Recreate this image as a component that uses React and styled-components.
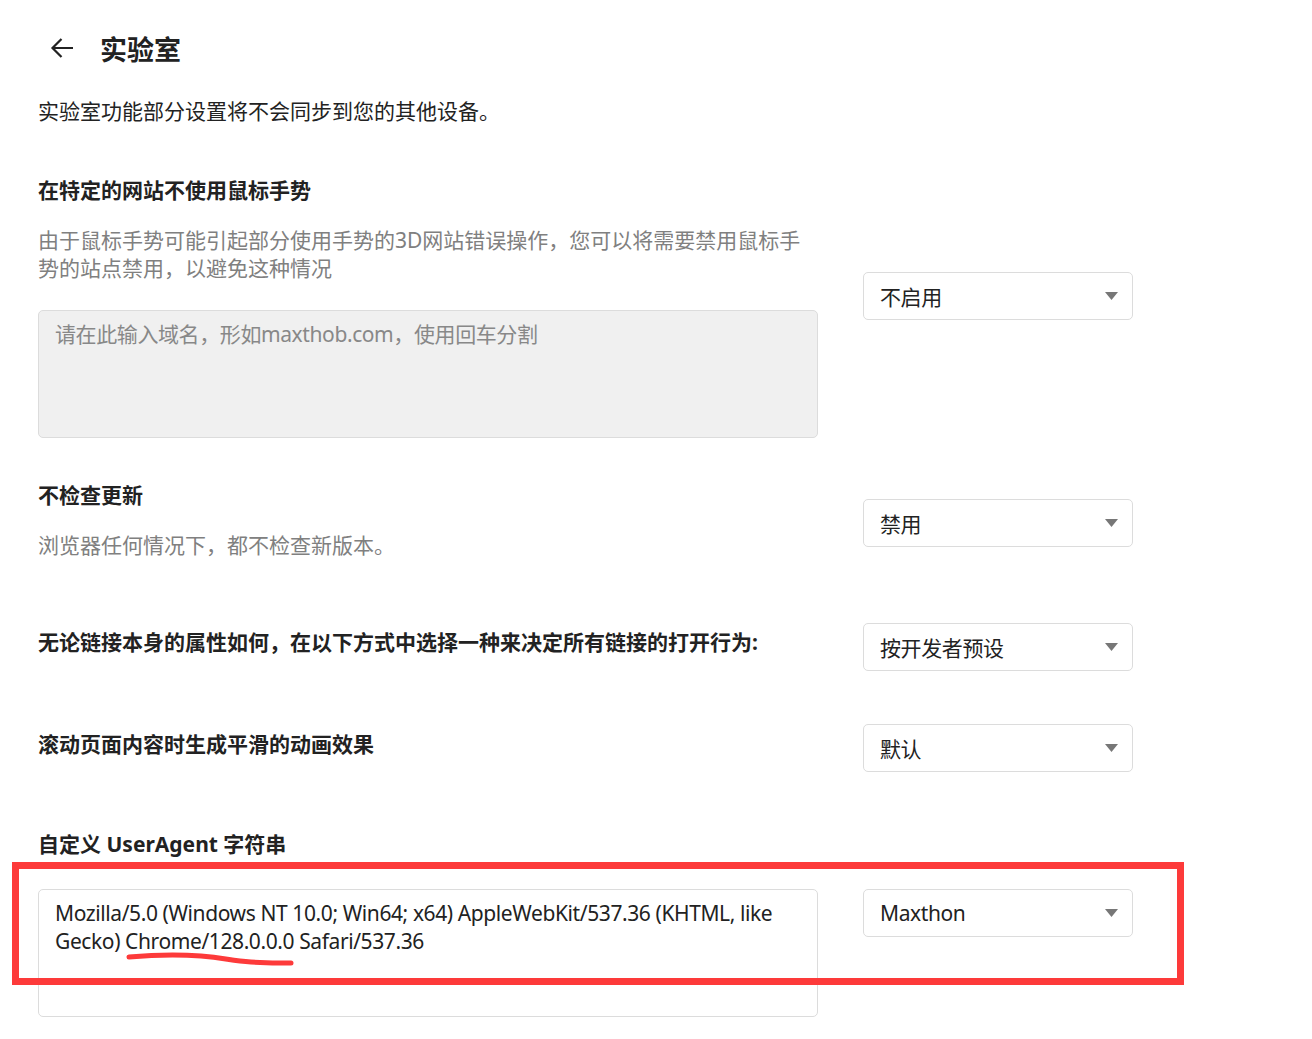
import React from "react";
import styled, { createGlobalStyle } from "styled-components";

const GlobalStyle = createGlobalStyle`
  html, body {
    margin: 0;
    padding: 0;
    background: #fff;
  }

  body {
    font-family: "Noto Sans", "Noto Sans CJK SC", sans-serif;
    color: #222;
  }
`;

const Page = styled.div`
  width: 1095px;
  padding: 30px 0 40px 38px;
`;

const Header = styled.div`
  display: flex;
  align-items: center;
  height: 40px;
`;

const BackButton = styled.button`
  display: flex;
  align-items: center;
  justify-content: center;
  width: 26px;
  height: 26px;
  margin: -4px 25px 0 11px;
  padding: 0;
  border: none;
  background: none;
  color: #222;
  cursor: pointer;
`;

const Title = styled.h1`
  margin: 0;
  font-size: 27px;
  font-weight: 700;
  line-height: 40px;
`;

const Notice = styled.p`
  margin: 27px 0 0;
  font-size: 21px;
  line-height: 28px;
  color: #222;
`;

const Section = styled.section`
  position: relative;
  display: grid;
  grid-template-columns: 780px 270px;
  column-gap: 45px;
  align-items: start;
  margin-top: ${(p) => p.$gap}px;
`;

const Heading = styled.h3`
  margin: 0;
  font-size: 21px;
  font-weight: 700;
  line-height: 28px;
  color: #222;
`;

const Description = styled.p`
  margin: 22px 0 0;
  font-size: 21px;
  line-height: 28px;
  color: #808080;
`;

const TextBox = styled.textarea`
  display: block;
  box-sizing: border-box;
  width: 780px;
  height: 128px;
  margin-top: ${(p) => p.$gap}px;
  padding: 9px 16px;
  border: 1px solid #dcdcdc;
  border-radius: 5px;
  background: ${(p) => (p.$filled ? "#f0f0f0" : "#fff")};
  font-family: "Noto Sans", "Noto Sans CJK SC", sans-serif;
  font-size: 21px;
  line-height: 28px;
  letter-spacing: -0.4px;
  color: #222;
  resize: none;
  outline: none;

  &::placeholder {
    color: #888;
  }
`;

const Select = styled.div`
  box-sizing: border-box;
  display: flex;
  align-items: center;
  justify-content: space-between;
  width: 270px;
  height: 48px;
  margin-top: ${(p) => p.$offset}px;
  padding: 0 14px 0 16px;
  border: 1px solid #dcdcdc;
  border-radius: 5px;
  background: #fff;
  font-size: 21px;
  letter-spacing: -0.4px;
  color: #222;
  cursor: pointer;
`;

const Highlight = styled.div`
  position: absolute;
  left: -26px;
  top: 32px;
  width: 1172px;
  height: 123px;
  box-sizing: border-box;
  border: 7px solid #fd3a3a;
  pointer-events: none;
`;

const Scribble = styled.svg`
  position: absolute;
  left: 88px;
  top: 122px;
  pointer-events: none;
`;

const Caret = () => (
  <svg width="13" height="8" viewBox="0 0 13 8">
    <path d="M0 0h13L6.5 8z" fill="#777" />
  </svg>
);

const Dropdown = ({ value, offset }) => (
  <Select $offset={offset}>
    <span>{value}</span>
    <Caret />
  </Select>
);

const UA =
  "Mozilla/5.0 (Windows NT 10.0; Win64; x64) AppleWebKit/537.36 (KHTML, like Gecko) Chrome/128.0.0.0 Safari/537.36";

const App = () => {
  return (
    <>
      <GlobalStyle />
      <Page>
        <Header>
          <BackButton aria-label="back">
            <svg width="24" height="22" viewBox="0 0 24 22" fill="none">
              <path
                d="M23 11H2.5M11.5 2L2.5 11l9 9"
                stroke="currentColor"
                strokeWidth="2.2"
              />
            </svg>
          </BackButton>
          <Title>实验室</Title>
        </Header>
        <Notice>实验室功能部分设置将不会同步到您的其他设备。</Notice>

        <Section $gap={51}>
          <div>
            <Heading>在特定的网站不使用鼠标手势</Heading>
            <Description>
              由于鼠标手势可能引起部分使用手势的3D网站错误操作，您可以将需要禁用鼠标手势的站点禁用，以避免这种情况
            </Description>
            <TextBox
              $filled
              $gap={28}
              placeholder="请在此输入域名，形如maxthob.com，使用回车分割"
            />
          </div>
          <Dropdown value="不启用" offset={96} />
        </Section>

        <Section $gap={43}>
          <div>
            <Heading>不检查更新</Heading>
            <Description>浏览器任何情况下，都不检查新版本。</Description>
          </div>
          <Dropdown value="禁用" offset={18} />
        </Section>

        <Section $gap={69}>
          <Heading>
            无论链接本身的属性如何，在以下方式中选择一种来决定所有链接的打开行为:
          </Heading>
          <Dropdown value="按开发者预设" offset={-5} />
        </Section>

        <Section $gap={59}>
          <Heading>滚动页面内容时生成平滑的动画效果</Heading>
          <Dropdown value="默认" offset={-6} />
        </Section>

        <Section $gap={58}>
          <div>
            <Heading>自定义 UserAgent 字符串</Heading>
            <TextBox $gap={31} defaultValue={UA} />
          </div>
          <Dropdown value="Maxthon" offset={59} />
          <Highlight />
          <Scribble width="170" height="16" viewBox="0 0 170 16" fill="none">
            <path
              d="M3 5C25 3 50 2 75 4S105 9 125 10S150 11 165 11"
              stroke="#fd3a3a"
              strokeWidth="5"
              strokeLinecap="round"
            />
          </Scribble>
        </Section>
      </Page>
    </>
  );
};

export default App;
